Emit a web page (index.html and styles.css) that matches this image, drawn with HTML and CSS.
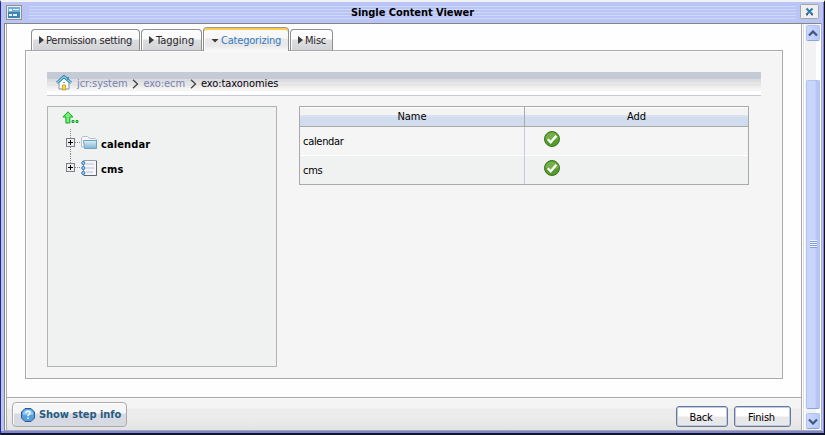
FILE: index.html
```html
<!DOCTYPE html>
<html lang="en">
<head>
<meta charset="utf-8">
<title>Single Content Viewer</title>
<link rel="stylesheet" href="styles.css">
</head>
<body>
<div class="window">
  <header class="titlebar">
    <svg class="app-icon" width="17" height="16" viewBox="0 0 17 16" shape-rendering="crispEdges"><rect x=".5" y=".5" width="15" height="14" fill="#ecebe8" stroke="#909090"/><path fill="#3d82b8" d="M2 2h12v11H2z"/><path fill="#70addb" d="M2 2h12v5H2z"/><path fill="#e4f2ff" d="M3 4h3v2H3zM7 4h6v1H7zM3 9h3v2H3zM7 9h4v2H7z"/></svg>
    <div class="stripes"><h1>Single Content Viewer</h1></div>
    <svg class="close" width="19" height="15" viewBox="0 0 19 15"><rect x=".5" y=".5" width="18" height="14" rx="1" fill="#eeefef" stroke="#a5a5aa"/><path d="M6.5 4.5l6 6m0-6l-6 6" stroke="#347aa8" stroke-width="2"/><path d="M6 10.8h2m3 0h2" stroke="#25465f"/></svg>
  </header>
  <div class="frame">
    <main class="content">
      <div class="workspace">
        <nav class="tabs">
          <a class="tab permission"><i class="arrow"></i><span>Permission setting</span></a>
          <a class="tab tagging"><i class="arrow"></i><span>Tagging</span></a>
          <a class="tab active"><i class="arrow down"></i><span>Categorizing</span></a>
          <a class="tab misc"><i class="arrow"></i><span>Misc</span></a>
        </nav>
        <section class="panel">
          <div class="breadcrumb">
            <svg class="home" width="16" height="16" viewBox="0 0 16 16"><path d="M3 7.5L8 3l5 4.5V14H3z" fill="#fafafa" stroke="#8a949d"/><path d="M1 7.7L8 1.5l7 6.2" fill="none" stroke="#267ba9" stroke-width="2.8"/><path d="M1 7.7L8 1.5l7 6.2" fill="none" stroke="#8ed4f2" stroke-width="1.2"/><path d="M12 2v3" stroke="#3b93bd" stroke-width="2"/><path d="M6.5 10h3v5h-3z" fill="#ffdc32" stroke="#b78e24" stroke-width=".7"/><path d="M7 7h2v1H7z" fill="#62aacc"/></svg>
            <span class="c1">jcr:system</span><svg class="chev" width="7" height="10" viewBox="0 0 7 10"><path d="M1 .7L5.5 5 1 9.3"/></svg><span class="c2">exo:ecm</span><svg class="chev" width="7" height="10" viewBox="0 0 7 10"><path d="M1 .7L5.5 5 1 9.3"/></svg><span class="c3">exo:taxonomies</span>
          </div>
          <div class="columns">
            <aside class="tree">
              <svg class="up" width="18" height="13" viewBox="0 0 18 13"><path d="M6 .8L.9 6h3v6h4V6h3z" fill="#77ef72" stroke="#13a42b"/><path d="M10 9.5h2v2h-2zm4 0h2v2h-2z" fill="#8cf08b" stroke="#13a42b"/></svg>
              <div class="node first">
                <svg class="branch" width="15" height="25" viewBox="0 0 15 25" shape-rendering="crispEdges"><path d="M4.500 0v25M9 13.500h6" stroke="#8c8c8c" stroke-dasharray="1 1"/><rect x=".5" y="9.500" width="8" height="8" rx="1" fill="#eee" stroke="#7e7e88"/><path d="M2 13.500h5M4.500 11v5" stroke="#000"/></svg>
                <svg class="node-icon" width="17" height="16" viewBox="0 0 17 16"><defs><linearGradient id="folder" x2="0" y2="1"><stop stop-color="#dfeff5"/><stop offset="1" stop-color="#7db4cf"/></linearGradient></defs><path d="M.5 12V2.500l1-1h5l2 2h6l1 1V12z" fill="#f4f6f8" stroke="#b9bfc8"/><path d="M2.500 5.500h13v8h-12z" fill="url(#folder)" stroke="#6fa3bf"/></svg><b class="n1">calendar</b>
              </div>
              <div class="node">
                <svg class="branch" width="15" height="25" viewBox="0 0 15 25" shape-rendering="crispEdges"><path d="M4.500 0v10M9 13.500h6" stroke="#8c8c8c" stroke-dasharray="1 1"/><rect x=".5" y="9.500" width="8" height="8" rx="1" fill="#eee" stroke="#7e7e88"/><path d="M2 13.500h5M4.500 11v5" stroke="#000"/></svg>
                <svg class="node-icon" width="17" height="16" viewBox="0 0 17 16"><path d="M2.500.5h13v15h-13z" fill="#f4f5fb" stroke="#9a9da5"/><path d="M15.500 1v14.500H3" fill="none" stroke="#62646b"/><path d="M5 4h8M5 8h8M5 12h7" stroke="#bfc0ca"/><g fill="#a5cdf8" stroke="#3673bd"><circle cx="2.300" cy="3" r="1.600"/><circle cx="2.300" cy="8" r="1.600"/><circle cx="2.300" cy="13" r="1.600"/></g></svg><b class="n2">cms</b>
              </div>
            </aside>
            <table>
              <thead><tr><th><span class="h1">Name</span></th><th><span class="h2">Add</span></th></tr></thead>
              <tbody>
                <tr><td><span class="r1">calendar</span></td><td><svg class="check" width="16" height="16" viewBox="0 0 16 16"><circle cx="8" cy="8" r="7.500" fill="#559a2c" stroke="#3a761d"/><path d="M1.500 8a6.500 6.500 0 0 1 13 0q-6 2-13 0z" fill="#75af48"/><path d="M3.700 8.300l3 3 5.700-6.500" fill="none" stroke="#fff" stroke-width="2.300"/></svg></td></tr>
                <tr><td><span class="r2">cms</span></td><td><svg class="check" width="16" height="16" viewBox="0 0 16 16"><circle cx="8" cy="8" r="7.500" fill="#559a2c" stroke="#3a761d"/><path d="M1.500 8a6.500 6.500 0 0 1 13 0q-6 2-13 0z" fill="#75af48"/><path d="M3.700 8.300l3 3 5.700-6.500" fill="none" stroke="#fff" stroke-width="2.300"/></svg></td></tr>
              </tbody>
            </table>
          </div>
        </section>
      </div>
      <footer>
        <button class="step"><svg width="14" height="14" viewBox="0 0 14 14"><path d="M4 .5h6L13.500 4v6L10 13.500H4L.5 10V4z" fill="#569fdc" stroke="#285b94"/><path d="M2 4l2.500-2h5L12 4v3H2z" fill="#8bc5f3"/><path d="M5 5.200q0-1.900 2-1.900t2 1.700q0 1-2 2.300v1M7 9.500V11" fill="none" stroke="#fff" stroke-width="1.400"/></svg><span>Show step info</span></button>
        <button class="action back"><span>Back</span></button>
        <button class="action finish"><span>Finish</span></button>
      </footer>
    </main>
    <div class="scrollbar">
      <div class="scroll-button"><svg width="10" height="7" viewBox="0 0 10 7"><path d="M1 5.500l4-4 4 4"/></svg></div>
      <div class="thumb"><i class="grip"></i></div>
      <div class="scroll-button bottom"><svg width="10" height="7" viewBox="0 0 10 7"><path d="M1 1.500l4 4 4-4"/></svg></div>
    </div>
  </div>
</div>
</body>
</html>
```
FILE: styles.css
```css
* { box-sizing: border-box; }
body { margin: 0; font: 11px/14px "DejaVu Sans Condensed", "DejaVu Sans", sans-serif; font-stretch: condensed; color: #000; overflow: hidden; }
svg { display: block; flex: none; }
span, b, h1 { white-space: nowrap; }
.window { width: 825px; height: 435px; display: flex; flex-direction: column; background: #bac5f5; border-top: 2px solid #f3f3f3; border-left: 1px solid #28288c; border-right: 1px solid #111; border-bottom: 2px solid #15152a; box-shadow: inset -1px -2px #7d84dc; }
.titlebar { height: 21px; flex: none; display: flex; align-items: flex-start; padding: 3px 5px 0 5px; }
.app-icon { margin-right: 6px; }
.stripes { width: 767px; height: 14px; margin-top: 1px; display: flex; justify-content: center; background: repeating-linear-gradient(#cdd8fc 0 1px, #bac5f5 1px 3px); }
h1 { margin: 0; font-size: 11px; line-height: 14px; letter-spacing: -.05px; }
.close { margin: -1px 0 0 4px; }
.frame { height: 408px; flex: none; display: flex; margin: 0 2px 0 3px; padding-left: 1px; border: 1px solid #858585; border-bottom-color: #aaa; border-right: 2px solid #a9aeba; background: #fff; }
.content { width: 796px; height: 406px; display: flex; flex-direction: column; border-left: 1px solid #aaa; border-right: 1px solid #aaa; background: #fefefe; }
.workspace { height: 373px; padding: 3px 18px 0; flex: none; }
.tabs { display: flex; height: 24px; align-items: flex-end; padding-left: 6px; position: relative; z-index: 1; }
.tab { height: 22px; display: flex; align-items: center; padding: 1px 0 0 7px; margin-right: 1px; border: 1px solid #8d8d8d; border-bottom-color: #aaa; border-radius: 4px 4px 0 0; background: linear-gradient(#fbfbfb 0 9px, #dddee0 10px, #d2d3d6); color: #2a2428; box-shadow: inset 1px 1px #fff; }
.permission { width: 109px; letter-spacing: -.27px; }
.tagging { width: 61px; }
.misc { width: 43px; letter-spacing: -.2px; }
.tab.active { width: 86px; height: 24px; background: linear-gradient(#f8f8f8 0 10px, #e9e9ea 11px 18px, #f5f5f5 21px); border-top: 1px solid #999; border-bottom: 0; color: #347ac0; box-shadow: inset 0 2px #ffcc48, inset 1px 0 #fff; padding-top: 2px; letter-spacing: -.2px; }
.arrow { width: 5px; height: 8px; background: #3c3c3c; clip-path: polygon(0 0,100% 50%,0 100%); margin: -1px 2px 0 0; flex: none; }
.arrow.down { width: 8px; height: 4px; clip-path: polygon(0 0,100% 0,50% 100%); margin-top: 0; }
.panel { height: 329px; margin-top: -1px; padding: 21px; border: 1px solid #aaa; background: #f5f5f5; width: 758px; box-shadow: inset 1px 1px #fafafa; }
.breadcrumb { width: 714px; height: 24px; border-bottom: 1px solid #c5c9d9; background: linear-gradient(#c5cad7 0 7px, #dcdde0 7px 10px, #e5e5e6 10px 14px, #eee 14px 16px, #f5f5f5 16px 19px, #fff 19px); display: flex; align-items: center; padding: 1px 0 0 9px; color: #7881b0; }
.home { margin: -2px 5px 0 0; }
.c1, .c2 { letter-spacing: -.07px; }
.chev { margin: 0 4px 0 5px; fill: none; stroke: #434343; stroke-width: 1.3; }
.c3 { color: #060008; letter-spacing: -.07px; }
.columns { display: flex; align-items: flex-start; gap: 22px; margin-top: 10px; }
.tree { width: 230px; height: 261px; border: 1px solid #b3b3b3; background: #f0f2f1; padding: 4px 0 0 14px; }
.node { height: 25px; display: flex; align-items: flex-start; margin-left: 4px; }
.node.first { margin-top: 5px; }
.node-icon { margin: 6px 3px 0 0; }
.node b { margin-top: 9px; letter-spacing: .1px; }
table { width: 450px; height: 79px; border: 1px solid #aaa; border-spacing: 0; border-collapse: separate; table-layout: fixed; background: #f5f5f5; }
th { height: 20px; padding: 1px 0 0 0; font-weight: normal; line-height: 14px; background: linear-gradient(#fff 0 1px, #f3f3f3 1px 8px, #d7e3ee 8px 10px, #d2dcef 10px); border-bottom: 1px solid #aaa; }
th + th { border-left: 1px solid #aaa; }
td { height: 29px; padding: 2px 0 0 4px; vertical-align: middle; line-height: 14px; border-bottom: 1px solid #fff; }
td + td { border-left: 1px solid #c5c9dc; padding: 0 0 4px 19px; }
tbody tr:last-child td { height: 28px; border-bottom: 0; background: #f0f2f1; }
td span { letter-spacing: -.3px; margin-left: -1px; }
footer { height: 33px; flex: none; border-top: 1px solid #aaa; background: linear-gradient(#fafafa 0 1px, #f4f4f4 1px 10px, #ececec 11px 20px, #e3e3e3); display: flex; align-items: flex-start; padding: 4px 0 0 5px; }
button { font: inherit; padding: 0; display: flex; align-items: center; }
.step { width: 115px; height: 25px; border: 1px solid #aaa; border-radius: 4px; background: linear-gradient(#f6f6f6 0 10px, #d7dae2 11px); padding: 1px 0 0 8px; gap: 4px; font-weight: bold; color: #285b82; margin-right: 549px; box-shadow: inset 1px 1px #fff; letter-spacing: -.05px; }
.step svg { margin-top: -1px; }
.action { height: 21px; margin-top: 4px; justify-content: center; border: 1px solid #6f7686; border-radius: 3px; background: linear-gradient(#fff 0 9px, #e8e8e8 10px); box-shadow: inset 0 0 0 1px #b5cbf8; padding: 3px 2px 0 0; letter-spacing: -.2px; }
.back { width: 52px; margin-right: 6px; }
.finish { width: 57px; }
.scrollbar { width: 18px; height: 406px; padding: 1px 1px 0 2px; border-left: 1px solid #ddd; margin-left: 1px; background: linear-gradient(90deg, #fff 0 1px, #f2f2f4 1px 12px, #fff 12px); display: flex; flex-direction: column; }
.scroll-button { width: 14px; height: 16px; flex: none; display: flex; align-items: center; justify-content: center; border-radius: 2px; border: 1px solid #b0c4f4; border-bottom-color: #83a8dd; background: linear-gradient(90deg, #cbd8fc, #b9c9f8); }
.scroll-button path { fill: none; stroke: #40557f; stroke-width: 2.2; }
.thumb { width: 14px; height: 329px; margin-top: 39px; border: 1px solid #b0c4f4; border-bottom-color: #83a8dd; border-radius: 2px; background: linear-gradient(90deg, #c9d6fb 0 8px, #b6c5f4 9px); display: flex; justify-content: center; align-items: center; }
.grip { width: 7px; height: 8px; margin-bottom: 1px; background: repeating-linear-gradient(#eef4ff 0 1px, #829de2 1px 2px); }
.bottom { margin-top: 4px; }
```
